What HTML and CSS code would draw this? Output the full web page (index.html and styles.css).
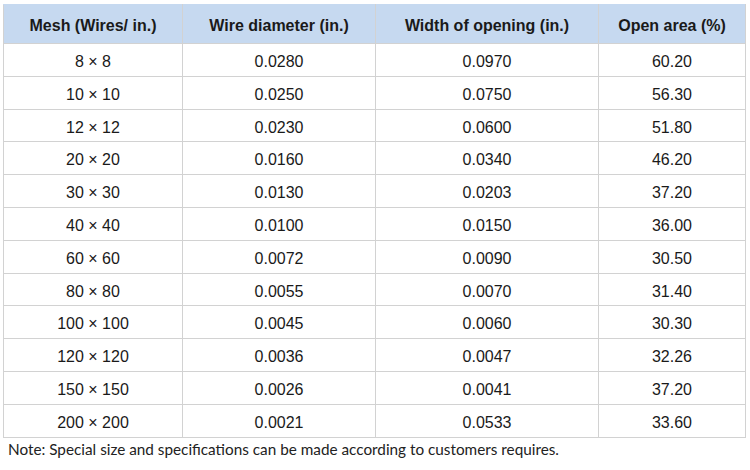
FILE: index.html
```html
<!DOCTYPE html>
<html>
<head>
<meta charset="utf-8">
<link rel="stylesheet" href="styles.css">
</head>
<body>
<div class="wrap">
<table class="spec">
<colgroup>
<col class="c1"><col class="c2"><col class="c3"><col class="c4">
</colgroup>
<thead>
<tr><th>Mesh (Wires/ in.)</th><th>Wire diameter (in.)</th><th>Width of opening (in.)</th><th>Open area (%)</th></tr>
</thead>
<tbody>
<tr><td>8 × 8</td><td>0.0280</td><td>0.0970</td><td>60.20</td></tr>
<tr><td>10 × 10</td><td>0.0250</td><td>0.0750</td><td>56.30</td></tr>
<tr><td>12 × 12</td><td>0.0230</td><td>0.0600</td><td>51.80</td></tr>
<tr><td>20 × 20</td><td>0.0160</td><td>0.0340</td><td>46.20</td></tr>
<tr><td>30 × 30</td><td>0.0130</td><td>0.0203</td><td>37.20</td></tr>
<tr><td>40 × 40</td><td>0.0100</td><td>0.0150</td><td>36.00</td></tr>
<tr><td>60 × 60</td><td>0.0072</td><td>0.0090</td><td>30.50</td></tr>
<tr><td>80 × 80</td><td>0.0055</td><td>0.0070</td><td>31.40</td></tr>
<tr><td>100 × 100</td><td>0.0045</td><td>0.0060</td><td>30.30</td></tr>
<tr><td>120 × 120</td><td>0.0036</td><td>0.0047</td><td>32.26</td></tr>
<tr><td>150 × 150</td><td>0.0026</td><td>0.0041</td><td>37.20</td></tr>
<tr><td>200 × 200</td><td>0.0021</td><td>0.0533</td><td>33.60</td></tr>
</tbody>
</table>
<p class="note">Note: Special size and specifications can be made according to customers requires.</p>
</div>
</body>
</html>
```

FILE: styles.css
```css
html, body {
  margin: 0;
  padding: 0;
  background: #ffffff;
}
.wrap {
  padding: 4px 0 0 3px;
}
.spec {
  border-collapse: collapse;
  width: 742px;
  table-layout: fixed;
  color: #1a1a1a;
}
.c1 { width: 179px; }
.c2 { width: 193px; }
.c3 { width: 223px; }
.c4 { width: 147px; }
.spec th, .spec td {
  border: 1px solid #d2d2d2;
  text-align: center;
  font-family: "Liberation Sans", Arial, sans-serif;
}
.spec th {
  background: #c6d9f0;
  font-weight: bold;
  font-size: 16px;
  padding: 3px 0 0 0;
  line-height: 35px;
  border-top-color: #c6d9f0;
}
.spec td {
  font-size: 16px;
  padding: 4px 0 0 0;
  line-height: 27.8px;
}
.note {
  margin: 2px 0 0 5px;
  font-family: Lato, "Open Sans", sans-serif;
  font-size: 15.3px;
  color: #222222;
}
```
